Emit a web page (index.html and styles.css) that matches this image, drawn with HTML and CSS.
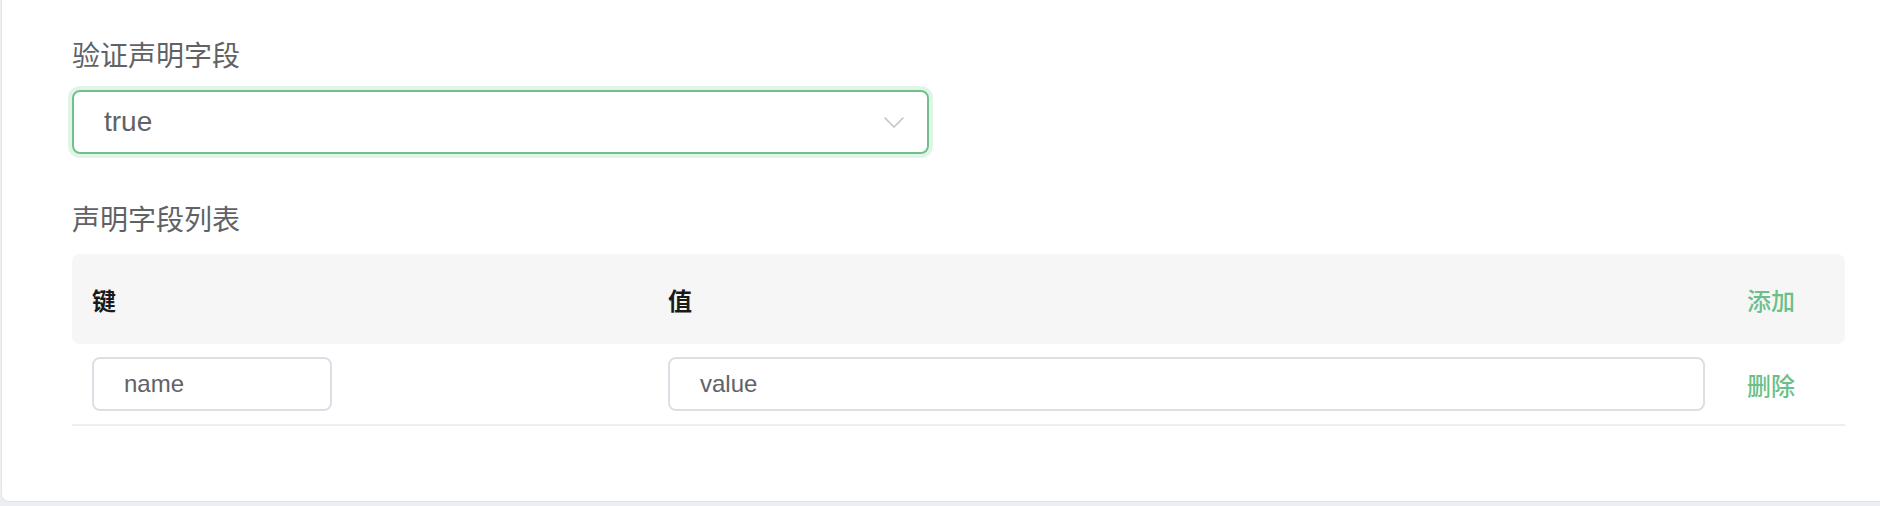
FILE: index.html
```html
<!DOCTYPE html>
<html lang="zh-CN">
<head>
<meta charset="utf-8">
<title>声明字段</title>
<link rel="stylesheet" href="styles.css">
</head>
<body>
<div class="page">
  <div class="card">
    <div class="form-item first">
      <div class="label">验证声明字段</div>
      <div class="select">
        <span class="select-value">true</span>
        <svg class="chevron" width="20" height="11" viewBox="0 0 20 11"><path d="M1 1 L10 10 L19 1" fill="none" stroke="#c0c4cc" stroke-width="1.6" stroke-linecap="round" stroke-linejoin="round"/></svg>
      </div>
    </div>
    <div class="form-item">
      <div class="label">声明字段列表</div>
      <div class="table">
        <div class="thead">
          <div class="cell th">键</div>
          <div class="cell th">值</div>
          <div class="cell op">添加</div>
        </div>
        <div class="trow">
          <div class="cell"><div class="input key">name</div></div>
          <div class="cell"><div class="input">value</div></div>
          <div class="cell op">删除</div>
        </div>
      </div>
    </div>
  </div>
</div>
</body>
</html>
```

FILE: styles.css
```css
html, body {
  margin: 0;
  padding: 0;
  overflow: hidden;
  background: #eceef4;
  font-family: "Liberation Sans", "Noto Sans CJK SC", sans-serif;
}

.page {
  padding: 0 0 4px 1px;
}

.card {
  background: #ffffff;
  border-left: 1px solid #e2e5ec;
  border-bottom: 1px solid #dfe2ea;
  border-bottom-left-radius: 8px;
  padding: 37px 35px 75px 70px;
}

.form-item.first {
  margin-bottom: 47px;
}

.label {
  font-size: 28px;
  line-height: 40px;
  color: #606266;
  margin-bottom: 13px;
}

.select {
  box-sizing: border-box;
  width: 857px;
  height: 64px;
  border: 2px solid #6fc18b;
  border-radius: 8px;
  box-shadow: 0 0 0 4px #e2f4e8;
  padding: 0 23px 0 30px;
  display: flex;
  align-items: center;
  justify-content: space-between;
}

.select-value {
  font-size: 28px;
  color: #606266;
}

.chevron {
  display: block;
}

.table {
  display: flex;
  flex-direction: column;
}

.thead,
.trow {
  display: grid;
  grid-template-columns: 576px 1fr 120px;
}

.thead {
  height: 90px;
  background: #f6f6f6;
  border-radius: 8px;
}

.trow {
  border-bottom: 2px solid #ebeef5;
}

.cell {
  display: flex;
  align-items: center;
  padding: 0 20px;
  font-size: 24px;
}

.trow .cell {
  padding-top: 13px;
  padding-bottom: 13px;
}

.th {
  font-weight: bold;
  color: #1a1a1a;
}

.op {
  color: #6cbf88;
  font-weight: 500;
  padding-left: 22px;
}

.input {
  box-sizing: border-box;
  width: 100%;
  height: 54px;
  border: 2px solid #dcdfe6;
  border-radius: 8px;
  padding: 0 30px;
  display: flex;
  align-items: center;
  font-size: 24px;
  color: #606266;
}

.input.key {
  width: 240px;
}
```
